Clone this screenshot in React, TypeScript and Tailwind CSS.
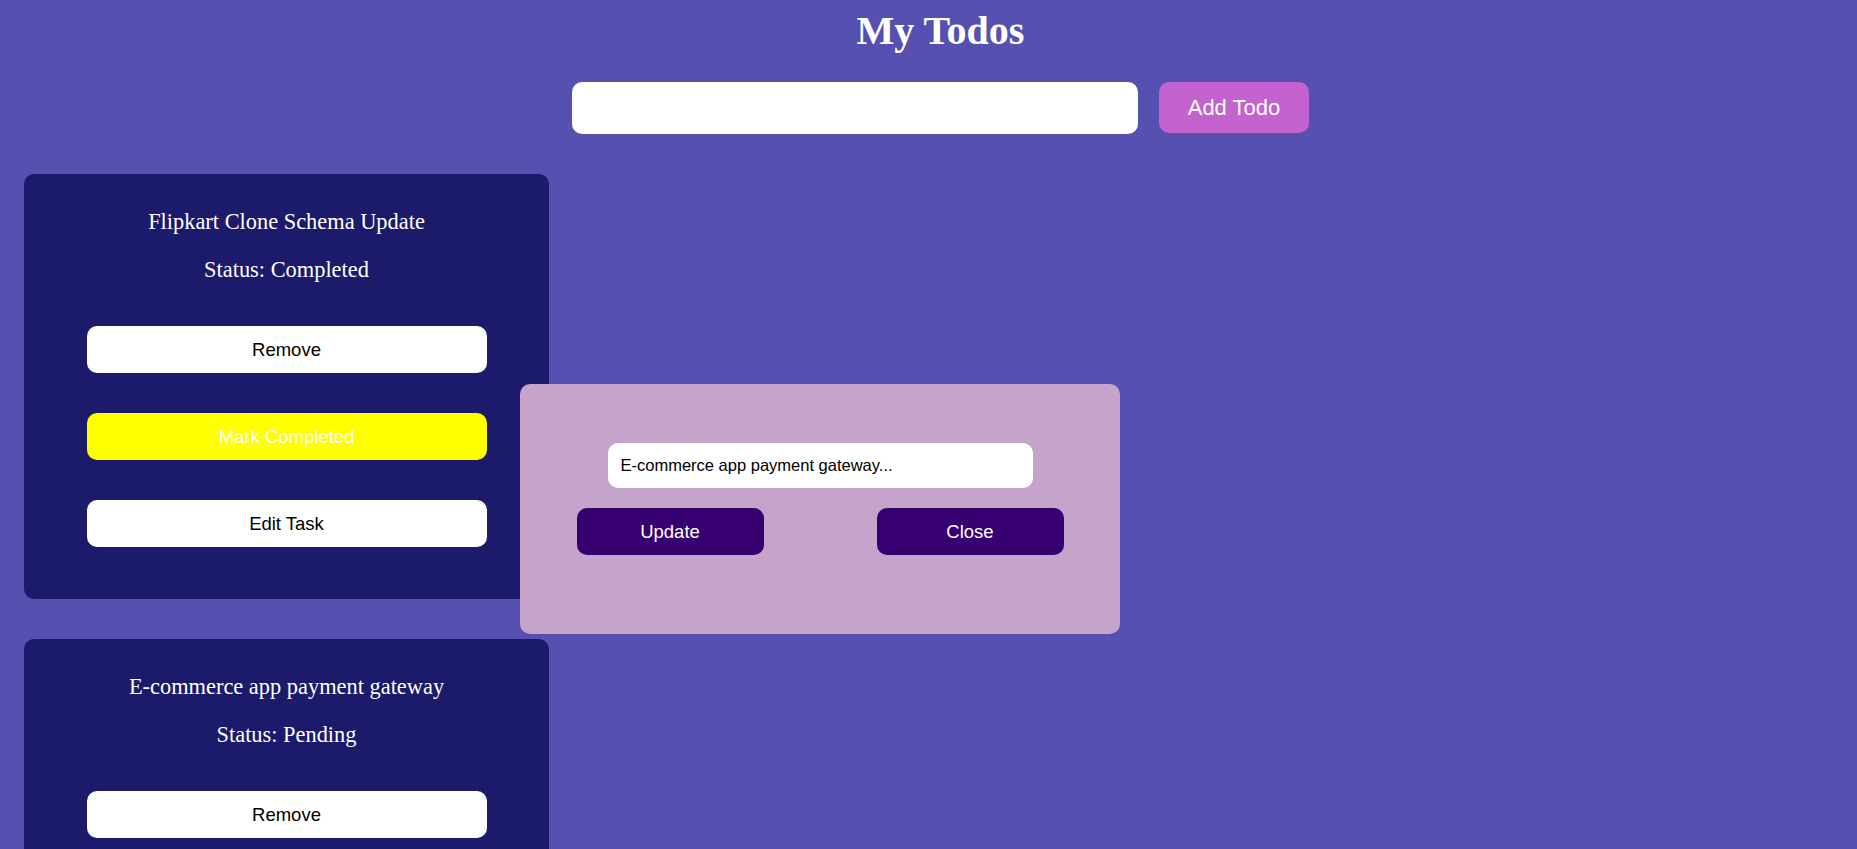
import React, { useState } from 'react';

interface Todo {
    title: string;
    completed: boolean;
}

const initialTodos: Todo[] = [
    { title: 'Flipkart Clone Schema Update', completed: true },
    { title: 'E-commerce app payment gateway', completed: false },
];

const sans = { fontFamily: '"Liberation Sans", Arial, sans-serif' };
const serif = { fontFamily: '"Liberation Serif", "Times New Roman", serif' };

const TodoCard = ({ todo, onEdit }: { todo: Todo; onEdit: () => void }) => {
    return (
        <div className="w-[525px] bg-[#1b1a6b] rounded-[10px] pt-[35px] pb-[52px] text-white text-center" style={serif}>
            <p className="text-[22.4px] leading-[25px]">{todo.title}</p>
            <p className="text-[22.4px] leading-[25px] mt-[23px]">Status: {todo.completed ? 'Completed' : 'Pending'}</p>
            <div className="mt-[44px] flex flex-col items-center gap-[40px]" style={sans}>
                <button className="w-[400px] h-[47px] rounded-[10px] bg-white text-black text-[18.5px]">Remove</button>
                <button className="w-[400px] h-[47px] rounded-[10px] bg-[#ffff00] text-white text-[18.5px]">Mark Completed</button>
                <button onClick={onEdit} className="w-[400px] h-[47px] rounded-[10px] bg-white text-black text-[18.5px]">Edit Task</button>
            </div>
        </div>
    );
};

const App = () => {
    const [todos] = useState<Todo[]>(initialTodos);
    const [text, setText] = useState('');
    const [editing, setEditing] = useState(true);

    return (
        <div className="relative h-[849px] overflow-hidden bg-[#5650b0] pl-[24px]">
            <h1 className="text-center text-white text-[40px] font-bold leading-[44px] pt-[9px]" style={serif}>My Todos</h1>

            <div className="flex justify-center gap-[21px] mt-[29px]" style={sans}>
                <input
                    type="text"
                    value={text}
                    onChange={(e) => setText(e.target.value)}
                    className="w-[566px] h-[52px] rounded-[10px] bg-white px-3 text-[18px] text-black outline-none"
                />
                <button className="w-[150px] h-[51px] rounded-[10px] bg-[#c462d0] text-white text-[22px]">Add Todo</button>
            </div>

            {/* todo list */}
            <div className="mt-[40px] flex flex-col gap-[40px]">
                {todos.map((todo, index) => (
                    <TodoCard key={index} todo={todo} onEdit={() => setEditing(true)} />
                ))}
            </div>

            {editing && (
                <div className="absolute left-[520px] top-[384px] w-[600px] h-[250px] rounded-[10px] bg-[#c5a3cb] pt-[59px]" style={sans}>
                    <input
                        type="text"
                        defaultValue="E-commerce app payment gateway..."
                        className="block mx-auto w-[425px] h-[45px] rounded-[10px] bg-white px-[13px] text-[16.5px] text-black outline-none"
                    />
                    <div className="mt-[20px] flex justify-around">
                        <button className="w-[187px] h-[47px] rounded-[10px] bg-[#370070] text-white text-[18.5px]">Update</button>
                        <button onClick={() => setEditing(false)} className="w-[187px] h-[47px] rounded-[10px] bg-[#370070] text-white text-[18.5px]">Close</button>
                    </div>
                </div>
            )}
        </div>
    );
};

export default App;
